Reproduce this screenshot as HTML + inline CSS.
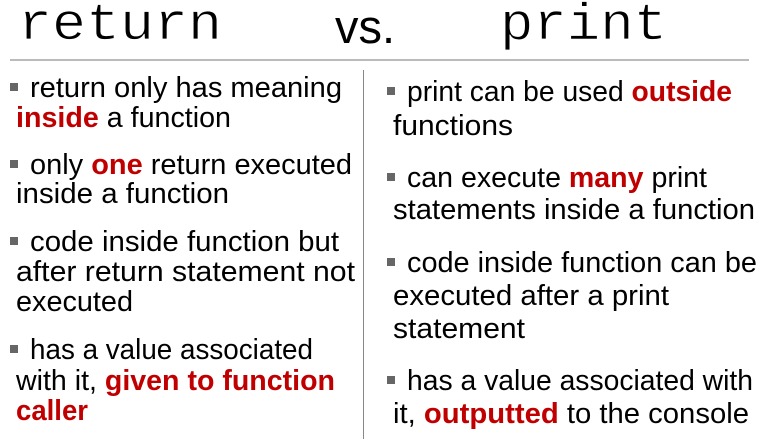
<!DOCTYPE html>
<html><head><meta charset="utf-8"><style>
body{margin:0;width:763px;height:439px;background:#fff;overflow:hidden;position:relative;font-family:"Liberation Sans",sans-serif;}
.t{position:absolute;white-space:nowrap;font-size:29px;line-height:30px;color:#000;transform-origin:0 50%;}
.r{color:#c00000;font-weight:bold;}
.b{position:absolute;width:8px;height:8px;background:#666;}
.m{position:absolute;font-family:"Liberation Mono",monospace;font-size:52px;line-height:52px;top:0px;white-space:nowrap;transform-origin:0 50%;-webkit-text-stroke:0.8px #fff;}
</style></head><body>
<div class="m" data-w="204" style="left:18px">return</div>
<div class="t" data-w="60" style="left:335px;top:3px;font-size:47px;line-height:47px">vs.</div>
<div class="m" data-w="167" style="left:500px">print</div>
<div style="position:absolute;left:10px;top:59px;width:739px;height:2px;background:#bbb"></div>
<div style="position:absolute;left:363px;top:70px;width:1px;height:369px;background:#888"></div>

<div class="b" style="left:10px;top:83px"></div>
<div class="t" data-w="312" style="left:30px;top:73px">return only has meaning</div>
<div class="t" data-w="215" style="left:16px;top:103px"><span class="r">inside</span> a function</div>
<div class="b" style="left:10px;top:160px"></div>
<div class="t" data-w="322" style="left:30px;top:150px">only <span class="r">one</span> return executed</div>
<div class="t" data-w="213" style="left:16px;top:179px">inside a function</div>
<div class="b" style="left:10px;top:237px"></div>
<div class="t" data-w="309" style="left:30px;top:227px">code inside function but</div>
<div class="t" data-w="339" style="left:16px;top:257px">after return statement not</div>
<div class="t" data-w="117" style="left:16px;top:287px">executed</div>
<div class="b" style="left:10px;top:345px"></div>
<div class="t" data-w="283" style="left:30px;top:335px">has a value associated</div>
<div class="t" data-w="319" style="left:16px;top:366px">with it, <span class="r">given to function</span></div>
<div class="t" data-w="72" style="left:16px;top:396px"><span class="r">caller</span></div>

<div class="b" style="left:387px;top:87px"></div>
<div class="t" data-w="325" style="left:407px;top:77px">print can be used <span class="r">outside</span></div>
<div class="t" data-w="120" style="left:393px;top:111px">functions</div>
<div class="b" style="left:387px;top:173px"></div>
<div class="t" data-w="300" style="left:407px;top:163px">can execute <span class="r">many</span> print</div>
<div class="t" data-w="362" style="left:393px;top:195px">statements inside a function</div>
<div class="b" style="left:387px;top:258px"></div>
<div class="t" data-w="350" style="left:407px;top:248px">code inside function can be</div>
<div class="t" data-w="276" style="left:393px;top:281px">executed after a print</div>
<div class="t" data-w="132" style="left:393px;top:314px">statement</div>
<div class="b" style="left:387px;top:376px"></div>
<div class="t" data-w="346" style="left:407px;top:366px">has a value associated with</div>
<div class="t" data-w="356" style="left:393px;top:399px">it, <span class="r">outputted</span> to the console</div>
<script>
document.querySelectorAll('[data-w]').forEach(function(e){var w=e.getBoundingClientRect().width;var t=+e.getAttribute('data-w');if(w>0)e.style.transform='scaleX('+(t/w)+')';});
</script>
</body></html>
